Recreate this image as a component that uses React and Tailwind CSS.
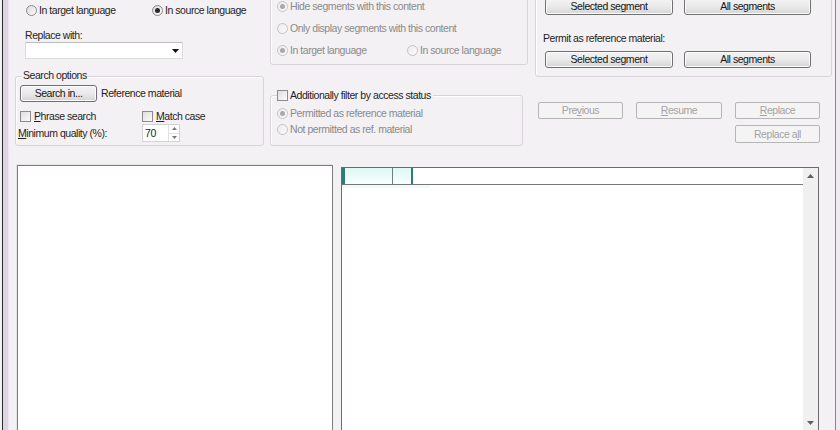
import React from 'react';

function Radio({ checked, disabled }) {
  return (
    <span
      className={`flex items-center justify-center w-[11px] h-[11px] rounded-full border shrink-0 bg-gradient-to-br ${
        disabled ? 'border-[#c4c4c4] from-[#ececec] to-[#fbfbfb]' : 'border-[#8a8a8a] from-[#d9d9d9] to-[#fdfdfd]'
      }`}
    >
      {checked && (
        <span className={`w-[5px] h-[5px] rounded-full ${disabled ? 'bg-[#a9a9a9]' : 'bg-[#2a2a2a]'}`}></span>
      )}
    </span>
  );
}

function Check() {
  return (
    <span className="w-[11px] h-[11px] border border-[#8c8c8c] bg-gradient-to-br from-[#dedede] to-[#fbfbfb] shrink-0"></span>
  );
}

function Option({ checked, disabled, children, className = '' }) {
  return (
    <span className={`flex items-center h-[13px] gap-[2px] ${disabled ? 'text-[#8a8a8a]' : 'text-[#1e1e1e]'} ${className}`}>
      <Radio checked={checked} disabled={disabled} />
      <span>{children}</span>
    </span>
  );
}

function Button({ children, className = '' }) {
  return (
    <button className={`h-[17px] flex items-center justify-center rounded-[3px] border border-[#707070] bg-gradient-to-b from-[#f3f3f3] via-[#eaeaea] to-[#d5d5d5] text-[#141414] shadow-[inset_0_0_0_1px_#fcfcfc] ${className}`}>
      {children}
    </button>
  );
}

function DisabledButton({ children, className = '' }) {
  return (
    <button className={`h-[17px] flex items-center justify-center rounded-[2px] border border-[#b5b5b5] bg-[#f5f4f5] text-[#a3a3a3] ${className}`}>
      {children}
    </button>
  );
}

export default function App() {
  return (
    <div className="w-[840px] h-[430px] flex overflow-hidden bg-[#f4f1f4] font-['Liberation_Sans',Arial,sans-serif] text-[10.5px] tracking-[-0.45px] leading-[13px]">
      {/* window frame, left */}
      <div className="w-[2px] bg-[#f3f0f3]"></div>
      <div className="w-[1px] bg-[#2b2b2b]"></div>
      <div className="w-[5px] bg-[#ddd5e0]"></div>
      <div className="w-[1px] bg-[#ece7ee]"></div>

      <div className="w-[826px] flex flex-col">
        {/* top controls */}
        <div className="h-[165px] shrink-0 flex">
          {/* column A */}
          <div className="w-[257px] flex flex-col">
            <div className="mt-[4px] ml-[17px] flex">
              <Option className="w-[126px]">In target language</Option>
              <Option checked>In source language</Option>
            </div>
            <div className="mt-[12px] ml-[16px] text-[#1e1e1e]">Replace with:</div>
            <div className="ml-[16px] w-[158px] h-[17px] bg-white border border-[#dcdcdc] border-t-[#bdbdbd] flex items-center justify-end pr-[3px]">
              <svg width="7" height="4" viewBox="0 0 7 4"><path d="M0 0h7L3.5 4z" fill="#111" /></svg>
            </div>
            <div className="mt-[17px] ml-[6px] w-[249px] h-[70px] border border-[#d8d4d9] rounded-[3px] shadow-[inset_1px_1px_0_#fff] flex flex-col">
              <span className="-mt-[8px] ml-[6px] px-[1px] bg-[#f4f1f4] w-fit text-[#1e1e1e]">Search options</span>
              <div className="mt-[3px] ml-[4px] flex items-center">
                <Button className="w-[77px]">Search in...</Button>
                <span className="ml-[4px] text-[#1e1e1e]">Reference material</span>
              </div>
              <div className="mt-[8px] ml-[4px] flex text-[#1e1e1e]">
                <span className="w-[122px] flex items-center gap-[3px]">
                  <Check />
                  <span><span className="underline">P</span>hrase search</span>
                </span>
                <span className="flex items-center gap-[3px]">
                  <Check />
                  <span><span className="underline">M</span>atch case</span>
                </span>
              </div>
              <div className="mt-[1px] ml-[2px] flex items-center text-[#1e1e1e]">
                <span className="w-[124px]"><span className="underline">M</span>inimum quality (%):</span>
                <div className="w-[38px] h-[18px] bg-white border border-[#d2d2d2] flex">
                  <span className="flex-1 pl-[2px] flex items-center">70</span>
                  <span className="w-[11px] flex flex-col border-l border-[#e2e2e2]">
                    <span className="flex-1 flex items-center justify-center">
                      <svg width="5" height="3" viewBox="0 0 5 3"><path d="M0 3h5L2.5 0z" fill="#777" /></svg>
                    </span>
                    <span className="flex-1 flex items-center justify-center border-t border-[#e2e2e2]">
                      <svg width="5" height="3" viewBox="0 0 5 3"><path d="M0 0h5L2.5 3z" fill="#777" /></svg>
                    </span>
                  </span>
                </div>
              </div>
            </div>
          </div>

          {/* column B */}
          <div className="w-[264px] flex flex-col">
            <div className="-mt-[10px] ml-[4px] w-[258px] h-[75px] border border-[#d8d4d9] rounded-[3px] shadow-[inset_1px_1px_0_#fff] pt-[9px] pl-[6px] flex flex-col gap-[9px]">
              <Option checked disabled>Hide segments with this content</Option>
              <Option disabled>Only display segments with this content</Option>
              <div className="flex">
                <Option checked disabled className="w-[130px]">In target language</Option>
                <Option disabled>In source language</Option>
              </div>
            </div>
            <div className="mt-[30px] ml-[4px] w-[253px] h-[51px] border border-[#d8d4d9] rounded-[3px] shadow-[inset_1px_1px_0_#fff] pl-[6px] flex flex-col">
              <span className="-mt-[7px] flex items-center gap-[2px] bg-[#f4f1f4] w-fit pr-[2px] text-[#1e1e1e]">
                <Check />
                <span>Additionally filter by access status</span>
              </span>
              <div className="mt-[5px] flex flex-col gap-[3px]">
                <Option checked disabled>Permitted as reference material</Option>
                <Option disabled>Not permitted as ref. material</Option>
              </div>
            </div>
          </div>

          {/* column C */}
          <div className="w-[305px] flex flex-col">
            <div className="-mt-[10px] ml-[5px] w-[297px] h-[87px] border border-[#d8d4d9] rounded-[3px] shadow-[inset_1px_1px_0_#fff] pt-[7px] flex flex-col">
              <div className="ml-[9px] flex gap-[11px]">
                <Button className="w-[128px]">Selected segment</Button>
                <Button className="w-[127px]">All segments</Button>
              </div>
              <span className="mt-[17px] ml-[7px] text-[#1e1e1e]">Permit as reference material:</span>
              <div className="mt-[6px] ml-[9px] flex gap-[11px]">
                <Button className="w-[128px]">Selected segment</Button>
                <Button className="w-[127px]">All segments</Button>
              </div>
            </div>
            <div className="mt-[25px] ml-[8px] flex gap-[13px]">
              <DisabledButton className="w-[85px]">Pre<span className="underline">v</span>ious</DisabledButton>
              <DisabledButton className="w-[86px]"><span className="underline">R</span>esume</DisabledButton>
              <DisabledButton className="w-[85px]"><span className="underline">R</span>eplace</DisabledButton>
            </div>
            <div className="mt-[6px] ml-[205px]">
              <DisabledButton className="w-[85px] h-[18px]">Replace a<span className="underline">l</span>l</DisabledButton>
            </div>
          </div>
        </div>

        {/* bottom panes */}
        <div className="flex items-start">
          <div className="ml-[8px] w-[316px] h-[270px] shrink-0 bg-white border border-[#7d7d7d] border-b-0 shadow-[-1px_-1px_0_#e6e3e7]"></div>
          <div className="mt-[2px] ml-[8px] w-[478px] h-[266px] shrink-0 bg-white border border-[#6b6b6b] flex">
            <div className="flex-1 flex flex-col">
              <div className="h-[17px] border-b border-[#777] flex">
                <span className="w-[3px] bg-[#2f7c77]"></span>
                <span className="w-[47px] bg-gradient-to-b from-[#dcf8f5] to-[#f8fffe]"></span>
                <span className="w-[1px] bg-[#6f7f7e]"></span>
                <span className="w-[18px] bg-gradient-to-b from-[#dcf8f5] to-[#f8fffe]"></span>
                <span className="w-[2px] bg-[#2f7c77]"></span>
              </div>
              <div className="h-[3px] w-[88px] bg-[#f0fbfa]"></div>
            </div>
            <div className="w-[15px] bg-[#f1f0f1] flex flex-col justify-between">
              <span className="h-[15px] flex items-center justify-center">
                <svg width="7" height="4" viewBox="0 0 7 4"><path d="M0 4h7L3.5 0z" fill="#606060" /></svg>
              </span>
              <span className="h-[15px] mb-[2px] flex items-center justify-center">
                <svg width="7" height="4" viewBox="0 0 7 4"><path d="M0 0h7L3.5 4z" fill="#606060" /></svg>
              </span>
            </div>
          </div>
        </div>
      </div>

      {/* window frame, right */}
      <div className="w-[1px] bg-[#8a878b]"></div>
      <div className="w-[4px] bg-[#efebf0]"></div>
    </div>
  );
}
